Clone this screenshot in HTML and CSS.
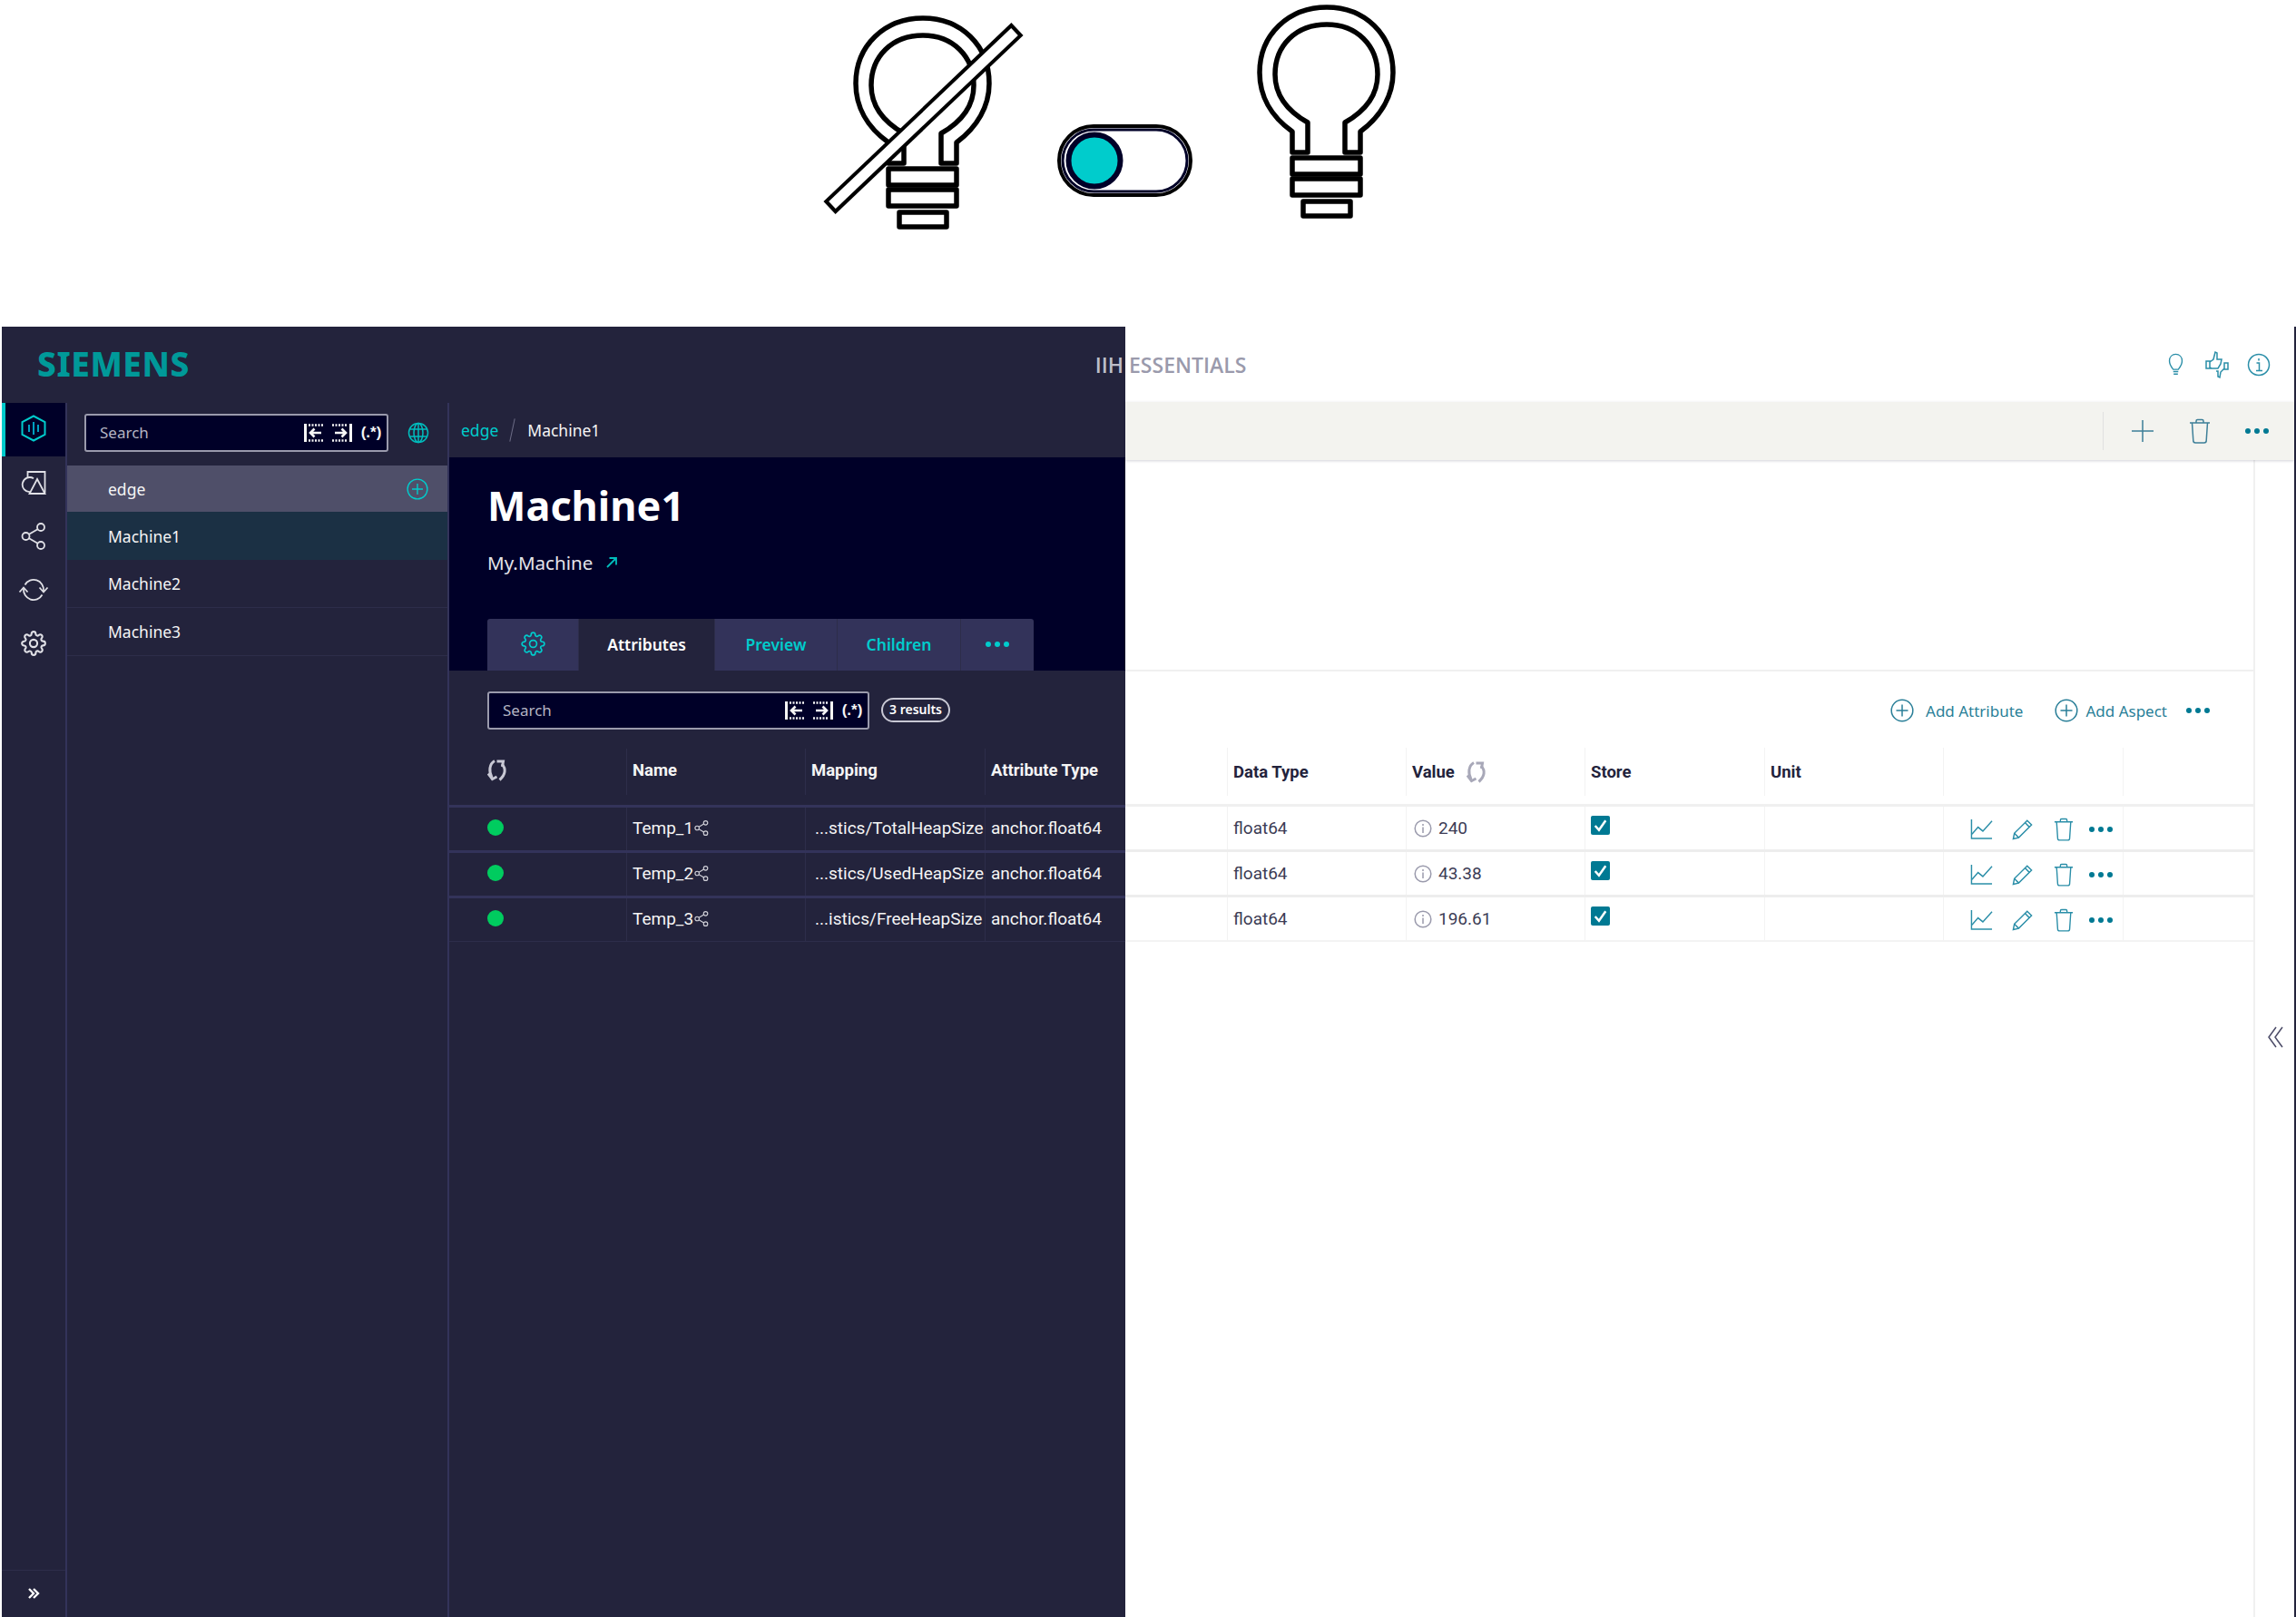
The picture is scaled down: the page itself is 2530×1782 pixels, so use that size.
FILE: index.html
```html
<!DOCTYPE html>
<html lang="en">
<head>
    <meta charset="UTF-8">
    <title>IIH Essentials</title>
    <link rel="stylesheet" href="styles.css">
</head>
<body>
    <!-- icon sprite -->
    <svg class="sprite" xmlns="http://www.w3.org/2000/svg">
        <symbol id="i-hex" viewBox="0 0 28 30"><path d="M14 1.500 26.500 8.200v13.600L14 28.500 1.500 21.800V8.200z" stroke="#00cccc"/><path d="M14 8v14M9 11v8M19 11v8" stroke="#00a0c0"/></symbol>
        <symbol id="i-shapes" viewBox="0 0 28 28"><path d="M7.500 8V2H26.500V25"/><path d="M14 9.300A8 8 0 1 0 10.500 24"/><path d="M18 10 26.500 26H9.500z"/></symbol>
        <symbol id="i-share" viewBox="0 0 28 30"><circle cx="22" cy="5" r="4"/><circle cx="5.500" cy="15" r="4"/><circle cx="22" cy="25" r="4"/><path d="M18.500 7.200 9 12.800M9 17.200l9.500 5.600"/></symbol>
        <symbol id="i-sync" viewBox="0 0 34 28"><path d="M7.500 8.500A11 11 0 0 1 28 15"/><path d="M26.500 19.500A11 11 0 0 1 6 13"/><path d="M23.500 11.500 28 16.500 32.500 11.500"/><path d="M1.500 16.500 6 11.500 10.500 16.500"/></symbol>
        <symbol id="i-gear" viewBox="0 0 24 24"><circle cx="12" cy="12" r="3.500"/><path d="M19.400 15a1.650 1.650 0 0 0 .33 1.820l.06.06a2 2 0 0 1 0 2.830 2 2 0 0 1-2.830 0l-.06-.06a1.650 1.650 0 0 0-1.820-.33 1.650 1.650 0 0 0-1 1.510V21a2 2 0 0 1-2 2 2 2 0 0 1-2-2v-.09A1.650 1.650 0 0 0 9 19.400a1.650 1.650 0 0 0-1.820.33l-.06.06a2 2 0 0 1-2.830 0 2 2 0 0 1 0-2.830l.06-.06a1.650 1.650 0 0 0 .33-1.820 1.650 1.650 0 0 0-1.510-1H3a2 2 0 0 1-2-2 2 2 0 0 1 2-2h.09A1.650 1.650 0 0 0 4.600 9a1.650 1.650 0 0 0-.33-1.820l-.06-.06a2 2 0 0 1 0-2.830 2 2 0 0 1 2.830 0l.06.06a1.650 1.650 0 0 0 1.820.33H9a1.650 1.650 0 0 0 1-1.510V3a2 2 0 0 1 2-2 2 2 0 0 1 2 2v.09a1.650 1.650 0 0 0 1 1.510 1.650 1.650 0 0 0 1.820-.33l.06-.06a2 2 0 0 1 2.830 0 2 2 0 0 1 0 2.830l-.06.06a1.650 1.650 0 0 0-.33 1.820V9a1.650 1.650 0 0 0 1.510 1H21a2 2 0 0 1 2 2 2 2 0 0 1-2 2h-.09a1.650 1.650 0 0 0-1.510 1z"/></symbol>
        <symbol id="i-globe" viewBox="0 0 24 24"><circle cx="12" cy="12" r="10.500"/><ellipse cx="12" cy="12" rx="5" ry="10.500"/><path d="M2.500 8h19M2.500 16h19M12 1.500v21"/></symbol>
        <symbol id="i-plus-circle" viewBox="0 0 26 26"><circle cx="13" cy="13" r="11.800"/><path d="M13 6.500v13M6.500 13h13"/></symbol>
        <symbol id="i-plus" viewBox="0 0 26 26"><path d="M13 1v24M1 13h24"/></symbol>
        <symbol id="i-trash" viewBox="0 0 24 28"><path d="M1 5h22M8 5V3a1.500 1.500 0 0 1 1.500-1.500h5A1.500 1.500 0 0 1 16 3v2"/><path d="M3.500 5l1.300 19.500A2.500 2.500 0 0 0 7.300 27h9.400a2.500 2.500 0 0 0 2.500-2.500L20.500 5"/></symbol>
        <symbol id="i-pencil" viewBox="0 0 26 26"><path d="M2.500 24.500 3.800 18 18.500 3.300l5 5L8.800 23z"/><path d="M16 5.800l5 5M3.800 18l5 5"/></symbol>
        <symbol id="i-chart" viewBox="0 0 26 26"><path d="M1.500 2v22H25"/><path d="M2 19l7-8 5.500 4.500L25 4"/></symbol>
        <symbol id="i-info" viewBox="0 0 20 20"><circle cx="10" cy="10" r="8.800"/><path d="M10 8.500v6.500M10 5v2"/></symbol>
        <symbol id="i-info-top" viewBox="0 0 26 26"><circle cx="13" cy="13" r="11.500"/><path d="M10.500 11H13.500V19M10 19.500h7M13 6v2.500"/></symbol>
        <symbol id="i-bulb" viewBox="0 0 18 28"><path d="M6 19.500C3.500 16.500 1.500 14 1.500 9.500 1.500 4.500 4.800 1.500 9 1.500s7.500 3 7.500 8c0 4.500-2 7-4.500 10z"/><path d="M6 22h6M6.500 25h5"/></symbol>
        <symbol id="i-feedback" viewBox="0 0 26 32"><path d="M1 12h4v8H1zM5 13l4-3 2-8 2 1v7h5l-1 5-3 5H7l-2-1"/><path d="M25 14h-4v7h4zM21 20l-4 4-1 6-2-1v-6h-2"/></symbol>
        <symbol id="i-refresh" viewBox="0 0 22 24"><path d="M8 1.500C2 5 1.500 13 5 20"/><path d="M1 15.500 5.500 21.500 10.500 19"/><path d="M16 5C21 10 20 17 13.500 22.500"/><path d="M10.500 2H17.500L16.500 8"/></symbol>
        <symbol id="i-arrow-left" viewBox="0 0 22 20"><path d="M1.500 0v20" stroke-width="3"/><path d="M5 1.500h17M5 18.500h17" stroke-dasharray="2 1.500" stroke-width="2.600"/><path d="M19 10H7M11.500 5.500 7 10l4.500 4.500" stroke-width="2.600"/></symbol>
        <symbol id="i-arrow-right" viewBox="0 0 22 20"><path d="M20.500 0v20" stroke-width="3"/><path d="M0 1.500h17M0 18.500h17" stroke-dasharray="2 1.500" stroke-width="2.600"/><path d="M3 10h12M10.500 5.500 15 10l-4.500 4.500" stroke-width="2.600"/></symbol>
        <symbol id="i-link" viewBox="0 0 14 14"><path d="M2 12 12 2M4.500 2H12v7.500"/></symbol>
        <symbol id="i-chevrons" viewBox="0 0 14 14"><path d="M2 2l5 5-5 5M7 2l5 5-5 5"/></symbol>
        <symbol id="i-chevrons-left" viewBox="0 0 18 24"><path d="M10 1 2 12l8 11M17 1 9 12l8 11"/></symbol>
        <symbol id="i-check" viewBox="0 0 20 20"><path d="M4.500 10.500 8.500 15 15.500 5"/></symbol>
    </svg>

    <div class="hero">
        <svg class="hero-art" viewBox="860 0 720 270" xmlns="http://www.w3.org/2000/svg">
            <defs>
                <g id="bulb">
                    <path d="M1424 168V145C1400 128 1388 105 1388 80 1388 38 1420 8 1462 8 1504 8 1535 38 1535 80 1535 105 1522 128 1499 145V168H1482V135C1505 122 1518 105 1518 82 1518 50 1495 27 1462 27 1428 27 1405 50 1405 82 1405 105 1418 122 1441 135V168Z"/>
                    <rect x="1424" y="174" width="75" height="18"/>
                    <rect x="1424" y="197" width="75" height="18"/>
                    <rect x="1436" y="222" width="52" height="16"/>
                </g>
            </defs>
            <g class="bulb-shape"><use href="#bulb" transform="translate(-445 12)"/></g>
            <path class="slash-outer" d="M914 229 1121 32"/>
            <path class="slash-inner" d="M917 226 1118 35"/>
            <rect class="toggle-outer" x="1167" y="139" width="145" height="76" rx="38"/>
            <rect class="toggle-inner" x="1171" y="143" width="137" height="68" rx="34"/>
            <circle class="knob" cx="1206" cy="177" r="28.500"/>
            <g class="bulb-shape"><use href="#bulb"/></g>
        </svg>
    </div>

    <div class="app">
        <div class="dark">
            <div class="brand">
                <span class="logo">SIEMENS</span>
                <span class="product-a">IIH</span>
            </div>
            <div class="dark-body">
                <nav class="rail">
                    <a class="rail-item active"><svg class="icon icon-hex"><use href="#i-hex"/></svg></a>
                    <a class="rail-item"><svg class="icon"><use href="#i-shapes"/></svg></a>
                    <a class="rail-item"><svg class="icon icon-tall"><use href="#i-share"/></svg></a>
                    <a class="rail-item"><svg class="icon icon-wide"><use href="#i-sync"/></svg></a>
                    <a class="rail-item"><svg class="icon"><use href="#i-gear"/></svg></a>
                    <a class="rail-foot"><svg class="icon-small"><use href="#i-chevrons"/></svg></a>
                </nav>

                <aside class="tree">
                    <div class="tree-search">
                        <div class="search search-tree">
                            <span class="search-text">Search</span>
                            <svg class="search-icon"><use href="#i-arrow-left"/></svg>
                            <svg class="search-icon"><use href="#i-arrow-right"/></svg>
                            <span class="regex">(.*)</span>
                        </div>
                        <svg class="globe"><use href="#i-globe"/></svg>
                    </div>
                    <div class="tree-row hover">
                        <span>edge</span>
                        <svg class="tree-add"><use href="#i-plus-circle"/></svg>
                    </div>
                    <div class="tree-row selected"><span>Machine1</span></div>
                    <div class="tree-row"><span>Machine2</span></div>
                    <div class="tree-row"><span>Machine3</span></div>
                </aside>

                <main class="main">
                    <div class="crumbs">
                        <a class="crumb-link">edge</a>
                        <span class="crumb-sep"></span>
                        <span>Machine1</span>
                    </div>
                    <header class="head">
                        <h1>Machine1</h1>
                        <p class="subtitle">My.Machine <svg class="link-icon"><use href="#i-link"/></svg></p>
                        <div class="tabs">
                            <div class="tab tab-gear"><svg class="tab-icon"><use href="#i-gear"/></svg></div>
                            <div class="tab tab-attrs current">Attributes</div>
                            <div class="tab tab-preview">Preview</div>
                            <div class="tab tab-children">Children</div>
                            <div class="tab tab-more"><span class="dots teal"><i></i><i></i><i></i></span></div>
                        </div>
                    </header>
                    <div class="content">
                        <div class="filter-row">
                            <div class="search search-main">
                                <span class="search-text">Search</span>
                                <svg class="search-icon"><use href="#i-arrow-left"/></svg>
                                <svg class="search-icon"><use href="#i-arrow-right"/></svg>
                                <span class="regex">(.*)</span>
                            </div>
                            <span class="results">3 results</span>
                        </div>
                        <div class="thead dark-grid">
                            <div class="cell"><svg class="refresh refresh-first"><use href="#i-refresh"/></svg></div>
                            <div class="cell">Name</div>
                            <div class="cell">Mapping</div>
                            <div class="cell">Attribute Type</div>
                        </div>
                        <div class="trow dark-grid">
                            <div class="cell"><span class="status"></span></div>
                            <div class="cell">Temp_1<svg class="map-icon"><use href="#i-share"/></svg></div>
                            <div class="cell cell-map">...stics/TotalHeapSize</div>
                            <div class="cell">anchor.float64</div>
                        </div>
                        <div class="trow dark-grid">
                            <div class="cell"><span class="status"></span></div>
                            <div class="cell">Temp_2<svg class="map-icon"><use href="#i-share"/></svg></div>
                            <div class="cell cell-map">...stics/UsedHeapSize</div>
                            <div class="cell">anchor.float64</div>
                        </div>
                        <div class="trow trow-last dark-grid">
                            <div class="cell"><span class="status"></span></div>
                            <div class="cell">Temp_3<svg class="map-icon"><use href="#i-share"/></svg></div>
                            <div class="cell cell-map">...istics/FreeHeapSize</div>
                            <div class="cell">anchor.float64</div>
                        </div>
                    </div>
                </main>
            </div>
        </div>

        <div class="light">
            <div class="topbar">
                <span class="product-b">ESSENTIALS</span>
                <div class="top-icons">
                    <svg class="top-bulb"><use href="#i-bulb"/></svg>
                    <svg class="top-feedback"><use href="#i-feedback"/></svg>
                    <svg class="top-info"><use href="#i-info-top"/></svg>
                </div>
            </div>
            <div class="toolbar">
                <span class="toolbar-sep"></span>
                <svg class="tool-plus"><use href="#i-plus"/></svg>
                <svg class="tool-trash"><use href="#i-trash"/></svg>
                <span class="dots blue"><i></i><i></i><i></i></span>
            </div>
            <div class="sheet">
                <section class="panel">
                    <div class="panel-gap"></div>
                    <div class="actions">
                        <svg class="add-icon"><use href="#i-plus-circle"/></svg>
                        <span class="add-label">Add Attribute</span>
                        <svg class="add-icon add-second"><use href="#i-plus-circle"/></svg>
                        <span class="add-label">Add Aspect</span>
                        <span class="dots blue actions-more"><i></i><i></i><i></i></span>
                    </div>
                    <div class="thead light-grid">
                        <div class="cell"></div>
                        <div class="cell">Data Type</div>
                        <div class="cell">Value <svg class="refresh"><use href="#i-refresh"/></svg></div>
                        <div class="cell">Store</div>
                        <div class="cell">Unit</div>
                        <div class="cell"></div>
                        <div class="cell"></div>
                    </div>
                    <div class="trow light-grid">
                        <div class="cell"></div>
                        <div class="cell">float64</div>
                        <div class="cell"><svg class="info"><use href="#i-info"/></svg>240</div>
                        <div class="cell"><span class="checkbox"><svg><use href="#i-check"/></svg></span></div>
                        <div class="cell"></div>
                        <div class="cell cell-actions">
                            <svg class="row-chart"><use href="#i-chart"/></svg>
                            <svg class="row-pencil"><use href="#i-pencil"/></svg>
                            <svg class="row-trash"><use href="#i-trash"/></svg>
                            <span class="dots blue"><i></i><i></i><i></i></span>
                        </div>
                        <div class="cell"></div>
                    </div>
                    <div class="trow light-grid">
                        <div class="cell"></div>
                        <div class="cell">float64</div>
                        <div class="cell"><svg class="info"><use href="#i-info"/></svg>43.38</div>
                        <div class="cell"><span class="checkbox"><svg><use href="#i-check"/></svg></span></div>
                        <div class="cell"></div>
                        <div class="cell cell-actions">
                            <svg class="row-chart"><use href="#i-chart"/></svg>
                            <svg class="row-pencil"><use href="#i-pencil"/></svg>
                            <svg class="row-trash"><use href="#i-trash"/></svg>
                            <span class="dots blue"><i></i><i></i><i></i></span>
                        </div>
                        <div class="cell"></div>
                    </div>
                    <div class="trow trow-last light-grid">
                        <div class="cell"></div>
                        <div class="cell">float64</div>
                        <div class="cell"><svg class="info"><use href="#i-info"/></svg>196.61</div>
                        <div class="cell"><span class="checkbox"><svg><use href="#i-check"/></svg></span></div>
                        <div class="cell"></div>
                        <div class="cell cell-actions">
                            <svg class="row-chart"><use href="#i-chart"/></svg>
                            <svg class="row-pencil"><use href="#i-pencil"/></svg>
                            <svg class="row-trash"><use href="#i-trash"/></svg>
                            <span class="dots blue"><i></i><i></i><i></i></span>
                        </div>
                        <div class="cell"></div>
                    </div>
                </section>
                <div class="side">
                    <svg class="side-toggle"><use href="#i-chevrons-left"/></svg>
                </div>
            </div>
        </div>
    </div>
</body>
</html>
```

FILE: styles.css
```css
body {
    margin: 0;
    background-color: #ffffff;
    font-family: "Noto Sans", Arial, sans-serif;
    overflow: hidden;
}

svg {
    fill: none;
    stroke: currentColor;
    stroke-width: 1.5;
    flex: none;
}

.sprite {
    display: none;
}

/* Bulbs and switch at the top */
.hero {
    height: 360px;
    padding-left: 860px;
}

.hero-art {
    display: block;
    width: 720px;
    height: 270px;
}

.bulb-shape {
    fill: #ffffff;
    stroke: #000000;
    stroke-width: 5.500;
    stroke-linejoin: round;
}

.slash-outer {
    stroke: #000000;
    stroke-width: 19;
}

.slash-inner {
    stroke: #ffffff;
    stroke-width: 11;
}

.toggle-outer {
    fill: #ffffff;
    stroke: #000000;
    stroke-width: 4;
}

.toggle-inner {
    fill: #ffffff;
    stroke: #000028;
    stroke-width: 3;
}

.knob {
    fill: #00cccc;
    stroke: #000028;
    stroke-width: 6;
}

/* App shell, split in a dark half and a light half */
.app {
    display: flex;
    height: 1422px;
    padding-left: 2px;
}

.dark {
    width: 1238px;
    background-color: #23233c;
    color: #f5f5f5;
    display: flex;
    flex-direction: column;
}

.light {
    flex: 1;
    min-width: 0;
    border-right: 2px solid #23233c;
    display: flex;
    flex-direction: column;
    color: #23233c;
}

.brand {
    height: 84px;
    padding-left: 39px;
    display: flex;
    align-items: center;
    justify-content: space-between;
}

.logo {
    font-family: "Noto Sans", Arial, sans-serif;
    font-weight: 800;
    font-size: 37px;
    letter-spacing: 0.600px;
    color: #009999;
    padding-bottom: 4px;
}

.product-a,
.product-b {
    font-family: "Open Sans", Arial, sans-serif;
    font-size: 23px;
    font-weight: 600;
    line-height: 36px;
}

.product-a {
    color: #bdbdca;
    padding-right: 2px;
}

.product-b {
    color: #9a9aac;
}

.dark-body {
    flex: 1;
    display: flex;
    min-height: 0;
}

/* Left rail */
.rail {
    width: 70px;
    border-right: 2px solid #33335a;
    display: flex;
    flex-direction: column;
    color: #e0e0e6;
}

.rail-item {
    height: 59px;
    box-sizing: border-box;
    padding-bottom: 2px;
    display: flex;
    align-items: center;
    justify-content: center;
}

.rail-item .icon {
    width: 28px;
    height: 28px;
    stroke-width: 1.800;
}

.rail-item .icon-hex {
    width: 28px;
    height: 30px;
    stroke-width: 2;
    margin-left: -4px;
}

.rail-item .icon-wide {
    width: 34px;
    height: 28px;
}

.rail-item .icon-tall {
    height: 30px;
}

.rail-item.active {
    background-color: #000028;
    border-left: 4px solid #00cccc;
    padding-bottom: 4px;
}

.rail-foot {
    margin-top: auto;
    height: 52px;
    box-sizing: border-box;
    padding-bottom: 2px;
    border-top: 1px solid #2d2d4a;
    display: flex;
    align-items: center;
    justify-content: center;
    color: #ffffff;
}

.icon-small {
    width: 14px;
    height: 14px;
    stroke-width: 2.400;
}

/* Tree */
.tree {
    width: 419px;
    border-right: 2px solid #33335a;
    font-size: 17.500px;
}

.tree-search {
    height: 69px;
    padding-left: 19px;
    display: flex;
    align-items: center;
    gap: 21px;
    box-sizing: border-box;
    padding-bottom: 4px;
}

.search {
    height: 42px;
    box-sizing: border-box;
    background-color: #000028;
    border: 2px solid #9a9aac;
    border-radius: 3px;
    display: flex;
    align-items: center;
    color: #f5f5f5;
}

.search-tree {
    width: 335px;
    padding: 0 5px 0 15px;
}

.search-main {
    width: 421px;
    padding: 0 5px 0 15px;
}

.search-text {
    flex: 1;
    font-size: 17px;
    color: #b4b4c2;
    padding-bottom: 1px;
}

.search-icon {
    width: 22px;
    height: 20px;
    margin-right: 9px;
}

.regex {
    font-family: "Liberation Sans", Arial, sans-serif;
    font-size: 17px;
    font-weight: bold;
    width: 24px;
    text-align: center;
    white-space: nowrap;
}

.globe {
    width: 24px;
    height: 24px;
    color: #00bdbd;
}

.tree-row {
    height: 52px;
    padding: 0 10px 0 45px;
    display: flex;
    align-items: center;
    justify-content: space-between;
    border-bottom: 1px solid #2d2d4a;
}

.tree-row.hover {
    background-color: #4f4f69;
    height: 51px;
    border-bottom: 0;
}

.tree-row.selected {
    background-color: #1b3044;
    height: 53px;
    border-bottom: 0;
}

.tree-add {
    width: 24px;
    height: 24px;
    color: #00cccc;
    margin-right: 11px;
}

/* Main column */
.main {
    flex: 1;
    min-width: 0;
    display: flex;
    flex-direction: column;
    font-size: 17.500px;
}

.crumbs {
    height: 60px;
    padding-left: 13px;
    display: flex;
    align-items: center;
}

.crumb-link {
    color: #00cccc;
}

.crumb-sep {
    width: 1px;
    height: 26px;
    margin: 0 16px 0 15px;
    background-color: #6c6c86;
    transform: rotate(12deg);
}

.head {
    height: 235px;
    box-sizing: border-box;
    background-color: #000028;
    padding: 23px 0 0 42px;
    display: flex;
    flex-direction: column;
}

.head h1 {
    margin: 0;
    font-size: 45px;
    line-height: 60px;
    font-weight: 700;
    color: #ffffff;
}

.subtitle {
    margin: 18px 0 0;
    font-size: 20.600px;
    line-height: 30px;
    color: #e4e4ea;
    display: flex;
    align-items: center;
    gap: 14px;
}

.link-icon {
    width: 14px;
    height: 14px;
    color: #00bdbd;
    stroke-width: 1.800;
}

.tabs {
    margin-top: auto;
    display: flex;
    height: 57px;
    font-size: 17.500px;
    font-weight: 600;
}

.tab {
    display: flex;
    align-items: center;
    justify-content: center;
    background-color: #33335a;
    color: #00cccc;
    border-right: 1px solid #2d2d4a;
    box-sizing: border-box;
    padding-bottom: 2px;
}

.tab.current {
    background-color: #23233c;
    color: #ffffff;
}

.tab-gear {
    width: 101px;
    border-radius: 3px 0 0 0;
}

.tab-attrs {
    width: 150px;
}

.tab-preview {
    width: 135px;
}

.tab-children {
    width: 136px;
}

.tab-more {
    width: 80px;
    border-radius: 0 3px 0 0;
    border-right: 0;
}

.tab-icon {
    width: 27px;
    height: 27px;
}

.dots {
    display: inline-flex;
    gap: 4px;
}

.dots i {
    width: 6px;
    height: 6px;
    border-radius: 50%;
    background-color: #00cccc;
}

.dots.blue i {
    background-color: #007993;
}

.content {
    padding-top: 23px;
}

.filter-row {
    display: flex;
    align-items: center;
    gap: 13px;
    padding-left: 42px;
    height: 41px;
    margin-bottom: 22px;
}

.results {
    border: 2px solid #c8c8d4;
    border-radius: 14px;
    padding: 0 7px;
    height: 27px;
    line-height: 22px;
    box-sizing: border-box;
    font-size: 14px;
    font-weight: 600;
    color: #ffffff;
}

/* Attribute tables, one per half */
.dark-grid {
    display: grid;
    grid-template-columns: 196px 197px 198px 1fr;
}

.light-grid {
    display: grid;
    grid-template-columns: 113px 197px 197px 198px 197px 198px 1fr;
}

.thead {
    height: 65px;
    box-sizing: border-box;
    padding-bottom: 11px;
    border-bottom: 3px solid #33335a;
    font-family: Roboto, Arial, sans-serif;
    font-size: 18.500px;
    font-weight: 700;
}

.trow {
    height: 50px;
    box-sizing: border-box;
    border-bottom: 3px solid #33335a;
    font-family: Roboto, Arial, sans-serif;
    font-size: 19px;
}

.trow-last {
    border-bottom-width: 1px;
    border-bottom-color: #2d2d4a;
    height: 48px;
}

.cell {
    display: flex;
    align-items: center;
    padding-left: 6px;
    border-right: 1px solid #2d2d4a;
    white-space: nowrap;
    min-width: 0;
}

.dark-grid .cell {
    padding-bottom: 3px;
}

.dark-grid .cell:first-child {
    padding-left: 42px;
}

.dark-grid .cell:last-child {
    border-right: 0;
}

.cell-map {
    padding-left: 10px;
}

.status {
    width: 18px;
    height: 18px;
    border-radius: 50%;
    background-color: #00cc5f;
}

.map-icon {
    width: 16px;
    height: 17px;
    margin-left: 1px;
    color: #d0d0d8;
    stroke-width: 2;
}

.refresh {
    width: 22px;
    height: 24px;
    color: #c8c8d4;
    stroke-width: 3;
    margin-left: 13px;
}

.refresh-first {
    margin-left: 0;
}

/* Light half */
.topbar {
    height: 83px;
    display: flex;
    align-items: center;
    justify-content: space-between;
    padding-left: 4px;
}

.top-icons {
    display: flex;
    align-items: center;
    color: #2a8ea8;
}

.top-bulb {
    width: 17px;
    height: 26px;
}

.top-feedback {
    width: 26px;
    height: 32px;
    margin-left: 24px;
}

.top-info {
    width: 26px;
    height: 26px;
    margin: 0 26px 0 20px;
}

.toolbar {
    height: 64px;
    background-color: #f3f3ef;
    box-shadow: 0 1px 3px rgba(0, 0, 40, 0.18);
    display: flex;
    align-items: center;
    justify-content: flex-end;
    color: #3d7f98;
    position: relative;
}

.toolbar-sep {
    width: 1px;
    height: 42px;
    background-color: #e0e0e0;
}

.tool-plus {
    width: 26px;
    height: 26px;
    margin-left: 30px;
    stroke-width: 1.500;
}

.tool-trash {
    width: 24px;
    height: 28px;
    margin-left: 38px;
}

.toolbar .dots {
    margin: 0 28px 0 38px;
}

.sheet {
    flex: 1;
    display: flex;
    min-height: 0;
}

.panel {
    width: 1243px;
    border-right: 2px solid #f0f0f0;
}

.panel-gap {
    height: 233px;
    border-bottom: 2px solid #f0f0f0;
    box-sizing: border-box;
}

.actions {
    height: 84px;
    box-sizing: border-box;
    display: flex;
    align-items: center;
    justify-content: flex-end;
    padding: 2px 48px 0 0;
    font-size: 17px;
    color: #2a7f98;
}

.add-icon {
    width: 26px;
    height: 26px;
}

.add-label {
    margin-left: 13px;
}

.add-second {
    margin-left: 35px;
}

.add-second + .add-label {
    margin-left: 8px;
}

.actions-more {
    margin-left: 21px;
}

.light-grid.thead {
    border-bottom-color: #f0f0f0;
    padding-bottom: 9px;
}

.light-grid.thead .refresh {
    color: #a8a8b8;
}

.light-grid.trow {
    border-bottom-color: #ededed;
    color: #3c3c55;
}

.light-grid .cell {
    border-right-color: #f3f3f3;
}

.light-grid.trow-last {
    border-bottom-width: 2px;
    border-bottom-color: #f3f3f3;
    height: 49px;
}

.light-grid .cell:first-child {
    padding-left: 0;
}

.light-grid .cell:last-child {
    border-right: 0;
}

.info {
    width: 20px;
    height: 20px;
    color: #9a9aac;
    margin: 0 7px 0 2px;
}

.checkbox {
    width: 21px;
    height: 21px;
    border-radius: 2px;
    background-color: #007993;
    color: #ffffff;
    display: flex;
    margin-bottom: 6px;
}

.checkbox svg {
    width: 21px;
    height: 21px;
    stroke-width: 2.400;
}

.cell-actions {
    padding-left: 29px;
    padding-top: 2px;
    color: #2a8ea8;
}

.row-chart {
    width: 25px;
    height: 25px;
}

.row-pencil {
    width: 25px;
    height: 25px;
    margin-left: 20px;
}

.row-trash {
    width: 22px;
    height: 26px;
    margin-left: 22px;
}

.cell-actions .dots {
    margin-left: 17px;
}

.side {
    flex: 1;
    display: flex;
    justify-content: center;
    padding-top: 624px;
    color: #4c4c68;
}

.side-toggle {
    width: 18px;
    height: 24px;
}
```
